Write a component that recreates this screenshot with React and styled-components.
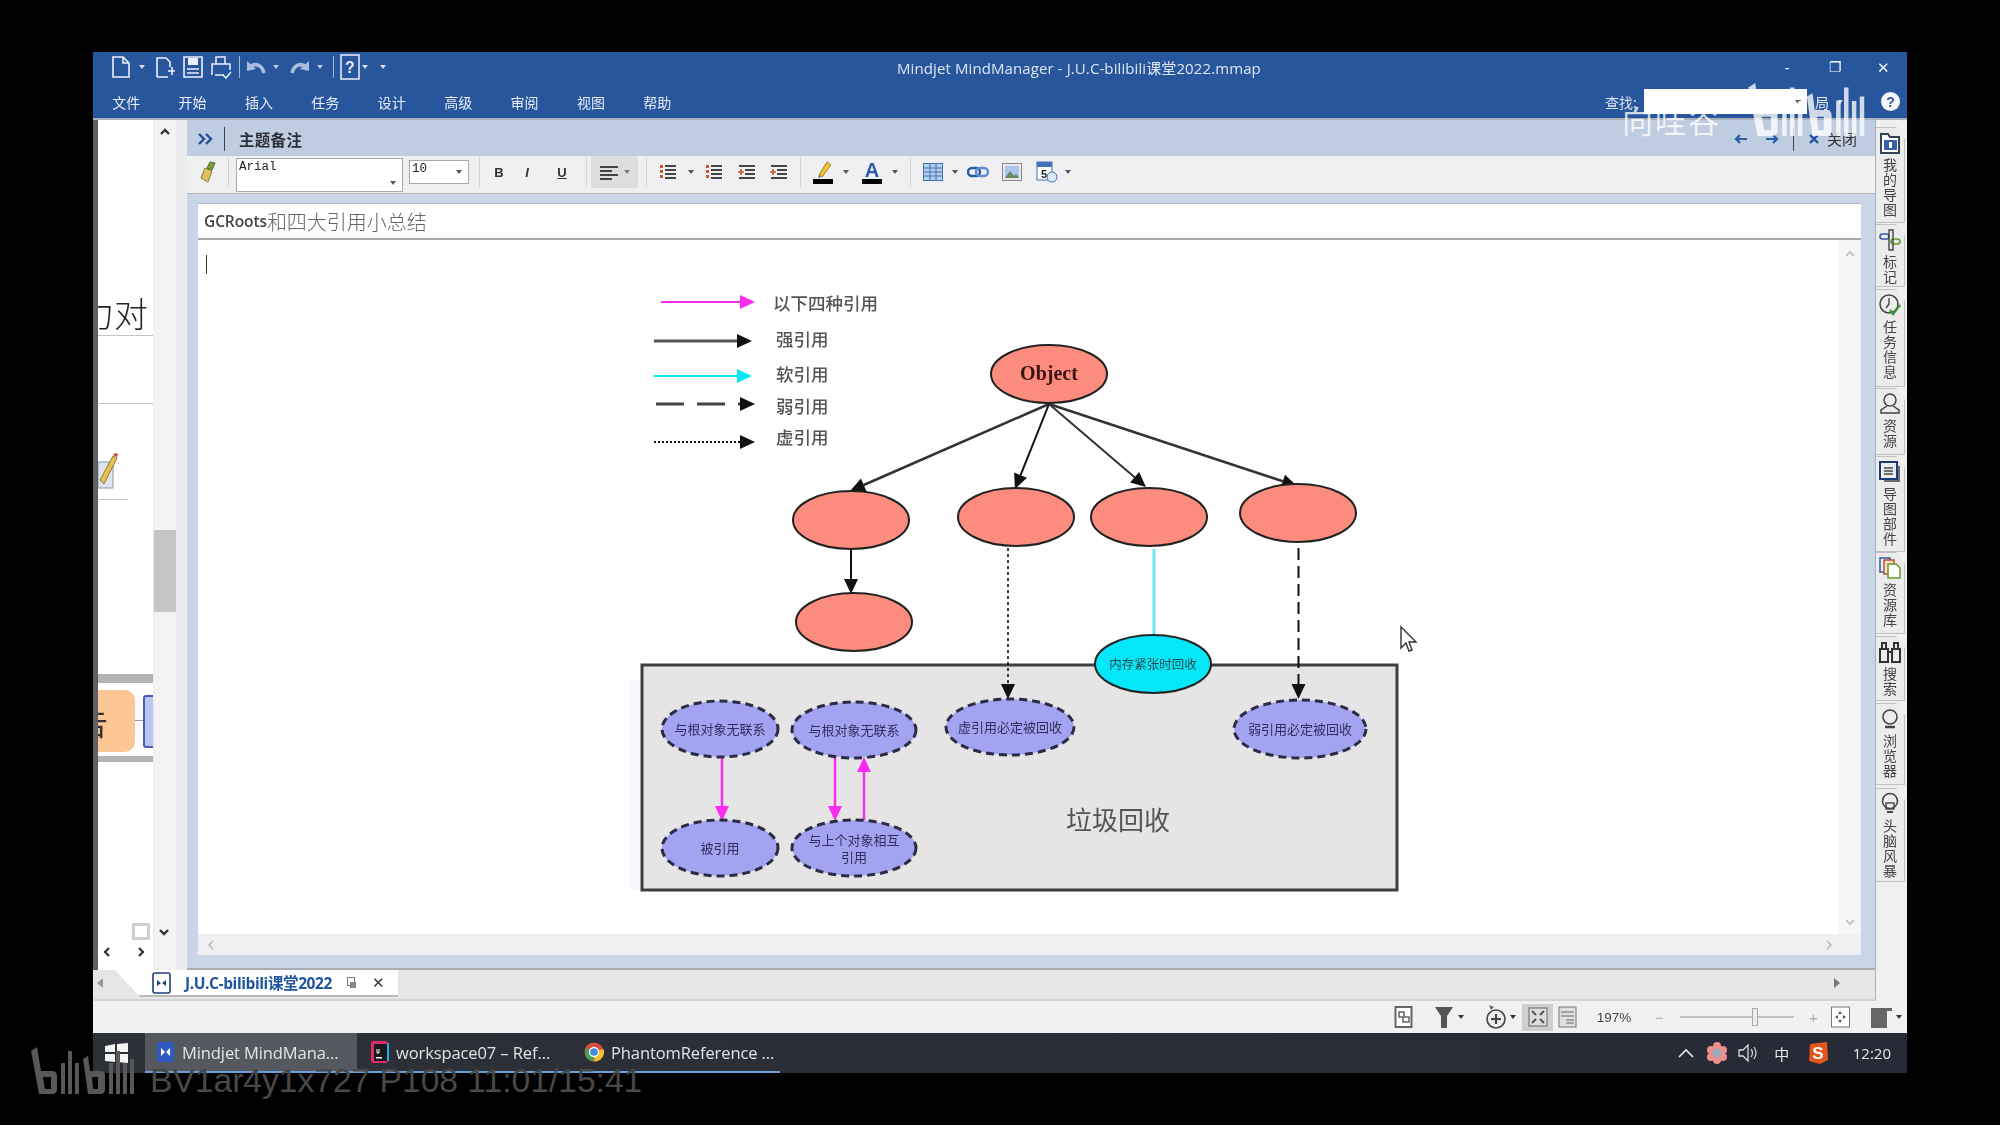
import React from 'react';
import styled, { createGlobalStyle } from 'styled-components';

const Global = createGlobalStyle`
  html, body { margin: 0; padding: 0; background: #000; }
  body { font-family: "Noto Sans CJK SC", "Liberation Sans", sans-serif; }
`;
const Screen = styled.div`
  position: relative; width: 2000px; height: 1125px; background: #000; overflow: hidden;
  padding: 52px 93px 52px 93px; box-sizing: border-box;
`;
const Window = styled.div`
  width: 1814px; height: 1021px; display: flex; flex-direction: column; filter: blur(0.5px); background: #f0f0f0;
`;
const TitleBar = styled.header`
  height: 66px; flex: none; background: #28569d; color: #e6ecf5; display: flex; flex-direction: column;
`;
const TopRow = styled.div`height: 32px; display: flex; align-items: center; padding: 0 0 2px 18px; box-sizing: border-box;`;
const MenuRow = styled.div`height: 34px; display: flex; align-items: center; padding-top: 1px; box-sizing: border-box;`;
const Q = styled.span`
  display: flex; align-items: center; justify-content: center; flex: none;
  width: ${p => p.$w}px; margin-left: ${p => p.$ml || 0}px;
`;
const QSep = styled.span`width: 1px; height: 22px; background: #9db5d8; flex: none; margin-left: ${p => p.$ml}px;`;
const WinTitle = styled.div`
  margin-left: 511px; width: 370px; font-family: "Open Sans", "Noto Sans CJK SC", sans-serif; font-size: 15px; letter-spacing: 0.1px;
  color: #dfe6f2; white-space: nowrap;
`;
const WinControls = styled.div`margin-left: auto; display: flex; align-items: center;`;
const WinBtn = styled.span`
  width: 48px; text-align: center; color: #f4f7fb; font-size: ${p => p.$s || 14}px; font-family: "Liberation Sans", sans-serif; line-height: 1;
`;
const MenuItem = styled.span`width: 66.4px; text-align: center; font-size: 14px; color: #e8edf6; flex: none;`;
const MenuRight = styled.div`margin-left: auto; display: flex; align-items: center;`;
const FindLabel = styled.span`font-size: 14px; color: #d9e2f0; margin-right: 7px;`;
const FindInput = styled.div`
  width: 163px; height: 25px; background: #fff; display: flex; align-items: center; justify-content: flex-end; padding-right: 6px; box-sizing: border-box;
`;
const Caret = styled.span`
  display: inline-block; width: 0; height: 0; flex: none; border-left: 3px solid transparent; border-right: 3px solid transparent;
  border-top: 4px solid ${p => p.$c || '#555'}; margin-left: ${p => p.$ml || 0}px;
`;
const LayoutLabel = styled.span`width: 30px; text-align: center; font-size: 14px; color: #e8edf6; flex: none;`;
const HelpDot = styled.span`
  width: 19px; height: 19px; border-radius: 50%; background: #f6f8fb; color: #28569d; font: bold 14px "Liberation Sans", sans-serif;
  display: flex; align-items: center; justify-content: center; margin: 0 7px 0 ${p => p.$ml}px;
`;
const Main = styled.div`height: 883px; flex: none; display: flex; border-top: 2px solid #aab0b8; box-sizing: border-box;`;
const Center = styled.div`width: 1782px; flex: none; display: flex; flex-direction: column;`;
const DocRow = styled.div`flex: 1; display: flex; min-height: 0;`;
const LeftPanel = styled.aside`
  width: 94px; flex: none; display: flex; background: #ececee; border-left: 5px solid #5e6064; box-sizing: border-box;
`;
const MapCanvas = styled.div`position: relative; width: 55px; flex: none; background: #fff; overflow: hidden;`;
const MapRule = styled.div`position: absolute; left: 0; top: ${p => p.$y - 120}px; height: ${p => p.$h || 1}px; width: ${p => p.$w || 55}px; background: ${p => p.$c || '#c4c4c4'};`;
const MapWord = styled.div`position: absolute; right: 5px; top: ${p => p.$y - 120}px; font-size: ${p => p.$s}px; color: #222; line-height: 1; white-space: nowrap; font-family: "Noto Sans CJK SC", sans-serif; font-weight: 300;`;
const Topic = styled.div`
  position: absolute; left: -20px; top: 570px; width: 57px; height: 62px; border-radius: 10px; background: #fcc794; box-sizing: border-box;
  display: flex; align-items: center; justify-content: flex-end; padding-right: 27px; font-size: 32px; color: #333; line-height: 1;
`;
const SubTopic = styled.div`
  position: absolute; left: 45px; top: 575px; width: 20px; height: 53px; background: #bcc4f0; border: 2px solid #4a5bc0; border-radius: 3px; box-sizing: border-box;
`;
const MapLink = styled.div`position: absolute; left: 37px; top: 600px; width: 8px; height: 1px; background: #999;`;
const PencilWrap = styled.div`position: absolute; left: 0; top: 332px;`;
const MapScroll = styled.div`
  width: 22px; flex: none; margin-left: 1px; background: #f3f3f4; display: flex; flex-direction: column; position: relative;
`;
const ScrollThumb = styled.div`position: absolute; left: 0; right: 0; top: 410px; height: 82px; background: #c5c5c7;`;
const Chev = styled.span`
  display: flex; justify-content: center; align-items: center; color: #333; flex: none;
`;
const ChevUpSlot = styled(Chev)`padding-top: 6px;`;
const LeftFoot = styled.div`position: absolute; left: -22px; top: 803px; width: 38px; display: flex; align-items: center; justify-content: space-between;`;
const MiniBox = styled.span`width: 18px; height: 17px; background: #fff; border: 3px solid #cfcfcf; box-sizing: border-box; display: flex;`;
const LeftNav = styled.div`position: absolute; left: -53px; top: 826px; width: 46px; display: flex; justify-content: space-between;`;
const NotePanel = styled.section`flex: 1; min-width: 0; display: flex; flex-direction: column; background: #e9edf3;`;
const NoteHead = styled.div`height: 36px; flex: none; background: #bfcde0; display: flex; align-items: center; color: #222; padding-top: 1px; box-sizing: border-box;`;
const HeadTitle = styled.strong`font-size: 15.5px; color: #2a2f38; margin-left: 14px; letter-spacing: .3px;`;
const HeadSep = styled.span`width: 1px; height: 24px; background: #444; flex: none; margin-left: ${p => p.$ml}px;`;
const HeadRight = styled.div`margin-left: auto; display: flex; align-items: center; padding-right: 18px;`;
const HeadClose = styled.span`font-size: 15px; color: #333; margin-left: 6px;`;
const ToolBar = styled.div`height: 38px; flex: none; background: #f0f0f2; border-bottom: 1px solid #b4b8be; display: flex; align-items: center; padding: 0 0 5px 10px; box-sizing: border-box;`;
const Tool = styled.span`
  display: flex; align-items: center; justify-content: center; flex: none; width: ${p => p.$w}px; margin-left: ${p => p.$ml || 0}px;
`;
const Letter = styled.span`font: ${p => p.$i ? 'italic' : 'normal'} bold 13px "Liberation Sans", sans-serif; color: #333; text-decoration: ${p => p.$u ? 'underline' : 'none'};`;
const TSep = styled.span`width: 1px; height: 30px; background: #d4d4d6; flex: none; margin-left: ${p => p.$ml}px;`;
const Combo = styled.div`
  width: ${p => p.$w}px; height: ${p => p.$h}px; margin-left: ${p => p.$ml}px; margin-top: ${p => p.$mt}px; align-self: flex-start; flex: none; background: #fff; border: 1px solid #a9a9a9; box-sizing: border-box;
  font: 12.5px/17px "Liberation Mono", monospace; color: #222; padding: 0 0 0 2px; position: relative;
`;
const ComboCaret = styled.span`position: absolute; right: 6px; top: ${p => p.$t}px; display: flex;`;
const AlignBox = styled.span`
  width: 47px; height: 32px; margin-left: 4px; background: #dddddf; flex: none; display: flex; align-items: center; padding-left: 9px; box-sizing: border-box;
`;
const NoteBody = styled.div`flex: 1; min-height: 0; padding: 9px 14px 13px 11px; background: #c9d6e8; display: flex; flex-direction: column; border-bottom: 2px solid #a9adb3;`;
const NoteTitle = styled.div`
  height: 37px; flex: none; background: #fff; border-bottom: 2px solid #a8a8a8; border-top: 1px solid #bbb; box-sizing: border-box; display: flex; align-items: center; padding-left: 6px; color: #555;
`;
const TitleLatin = styled.span`font: 600 15.5px "Open Sans", sans-serif; color: #444; letter-spacing: -.1px;`;
const TitleCjk = styled.span`font-size: 20px; color: #666; font-weight: 300;`;
const EditorRow = styled.div`flex: 1; min-height: 0; display: flex; background: #fff;`;
const Editor = styled.div`flex: 1; min-width: 0; padding: 15px 0 0 8px; box-sizing: border-box; position: relative;`;
const TextCaret = styled.div`width: 1px; height: 19px; background: #333;`;
const Diagram = styled.svg`position: absolute; left: 427px; top: 40px;`;
const VScroll = styled.div`width: 22px; flex: none; background: #f6f6f7; display: flex; flex-direction: column; justify-content: space-between; padding: 8px 0 6px; box-sizing: border-box;`;
const HScroll = styled.div`height: 21px; flex: none; background: #f0f0f2; display: flex; justify-content: space-between; align-items: center; padding: 0 26px 0 7px;`;
const TabRow = styled.div`height: 31px; flex: none; background: #e6e6e6; border-bottom: 2px solid #d4d4d4; box-sizing: border-box; display: flex; align-items: flex-start; position: relative; padding-right: 35px;`;
const DocTab = styled.div`
  width: 283px; height: 27px; margin-left: 12px; padding-left: 36px; background: #fff; box-sizing: border-box; display: flex; align-items: center; border-bottom: 2px solid #bbb; flex: none;
  clip-path: polygon(0 0, 100% 0, 100% 100%, 25px 100%);
`;
const TabName = styled.span`font: bold 15.5px "Open Sans", "Noto Sans CJK SC", sans-serif; letter-spacing: -.4px; color: #1f55a0; margin-left: 13px; white-space: nowrap;`;
const TabPop = styled.span`display: flex; flex: none; margin-left: 15px;`;
const TabX = styled.span`font: 15px "Liberation Sans", sans-serif; color: #333; margin-left: 15px; flex: none;`;
const TabPrev = styled.span`margin: 8px 0 0 4px; flex: none; width: 0; height: 0; border: 5px solid transparent; border-right: 6px solid #999; border-left: 0;`;
const TabNext = styled.span`margin: 8px 0 0 auto; flex: none; width: 0; height: 0; border: 5px solid transparent; border-left: 6px solid #777; border-right: 0;`;
const RightStrip = styled.nav`width: 32px; flex: none; background: #f0f0f0; border-left: 1px solid #aab0b8; box-sizing: border-box; padding: 7px 0 0 0; display: flex; flex-direction: column;`;
const SideTab = styled.div`
  height: ${p => p.$h}px; margin-top: ${p => p.$mt || 0}px; width: 29px; flex: none; box-sizing: border-box; background: #ececec; border: 1px solid #c0c0c0; border-left: 0;
  display: flex; flex-direction: column; align-items: center; padding-top: 3px; clip-path: polygon(0 0, 70% 0, 100% 12px, 100% 100%, 0 100%);
`;
const SideLabel = styled.span`writing-mode: vertical-rl; text-orientation: upright; font-size: 14px; line-height: 1; color: #444; margin-top: 3px; letter-spacing: 1px;`;
const StatusBar = styled.footer`height: 32px; flex: none; background: #f1f1f1; display: flex; align-items: center; padding-right: 5px;`;
const SI = styled.span`display: flex; align-items: center; justify-content: center; flex: none; width: ${p => p.$w}px; margin-left: ${p => p.$auto ? 'auto' : `${p.$ml}px`};`;
const SIBox = styled.span`width: 31px; height: 27px; margin-left: 6px; background: #cfcfcf; display: flex; align-items: center; justify-content: center; flex: none;`;
const Zoom = styled.span`font: 13.5px "Liberation Sans", sans-serif; color: #444; width: 36px; margin-left: 19px; flex: none; text-align: center;`;
const PM = styled.span`font: 15px "Liberation Sans", sans-serif; color: #aaa; width: 8px; margin-left: ${p => p.$ml}px; flex: none; text-align: center;`;
const Slider = styled.div`width: 114px; height: 2px; margin-left: 17px; background: #c4c4c4; flex: none; position: relative;`;
const Thumb = styled.span`position: absolute; left: 72px; top: -8px; width: 6px; height: 18px; border: 1px solid #aaa; background: #eee; box-sizing: border-box;`;
const TaskBar = styled.div`height: 40px; flex: none; background: linear-gradient(90deg,#2e3037,#2b2e38 60%,#262a36); display: flex; align-items: center; color: #e2e4e8;`;
const StartBtn = styled.span`width: 52px; flex: none; display: flex; justify-content: center; padding-right: 6px; box-sizing: border-box;`;
const TaskBtn = styled.div`
  width: ${p => p.$w}px; height: 40px; flex: none; box-sizing: border-box; background: ${p => p.$active ? '#55585f' : 'transparent'}; border-bottom: 2px solid #6aa0da;
  display: flex; align-items: center; padding-left: ${p => p.$pl}px; gap: 7px; font: 16.5px "Open Sans", sans-serif; white-space: nowrap; letter-spacing: -.1px;
`;
const Tray = styled.div`margin-left: auto; display: flex; align-items: center; height: 100%; padding-right: 16px;`;
const TrayItem = styled.span`display: flex; justify-content: center; flex: none; width: ${p => p.$w}px; margin-left: ${p => p.$ml}px; font-size: 15px; color: #e8e8e8;`;
const Clock = styled.span`font: 15px "Open Sans", sans-serif; color: #e8e8e8; margin-left: 24px; flex: none;`;
const Wm = styled.div`position: absolute; left: ${p => p.$x}px; top: ${p => p.$y}px; display: flex; align-items: center; pointer-events: none;`;
const WmName = styled.span`font-size: 31px; letter-spacing: 2px; color: rgba(255,255,255,.78); line-height: 1;`;
const WmCode = styled.span`font: 33.6px "Liberation Sans", sans-serif; color: #484848; white-space: nowrap; line-height: 1;`;

const S = ({ w = 20, h = 20, vb, children }) => <svg width={w} height={h} viewBox={vb || `0 0 ${w} ${h}`} fill="none" style={{ flex: 'none' }}>{children}</svg>;
const IconNew = () => <S w={20} h={24}><path d="M2 2h10l6 6v14H2z M12 2v6h6" stroke="#eef" strokeWidth="1.6"/></S>;
const IconOpen = () => <S w={22} h={24}><path d="M3 22V3h9l4 4v5 M3 22h11 M14 16h7m-3-4v8" stroke="#eef" strokeWidth="1.6"/></S>;
const IconSave = () => <S w={22} h={24}><path d="M2 2h18v20H2z" stroke="#eef" strokeWidth="1.6"/><path d="M6 3h10v7H6z" fill="#eef"/><path d="M5 14h12M5 18h12" stroke="#eef" strokeWidth="1.6"/></S>;
const IconPrint = () => <S w={22} h={24}><path d="M6 9V2h9v7 M2 20V9h18v6 M5 20h9" stroke="#eef" strokeWidth="1.5"/><path d="M13 20l3 3 5-6" stroke="#dfe" strokeWidth="1.5"/></S>;
const IconUndo = ({ flip }) => <S w={20} h={20}><g transform={flip ? 'translate(20 0) scale(-1 1)' : ''}><path d="M18 16C16 8 10 6 5 9" stroke="#a9bedd" strokeWidth="3.6"/><path d="M1 4v10l9-2z" fill="#a9bedd"/></g></S>;
const IconHelpBox = () => <S w={20} h={26}><rect x="1" y="1" width="18" height="24" stroke="#eef" strokeWidth="1.5"/><text x="10" y="19" textAnchor="middle" fontSize="16" fontWeight="700" fill="#eef" fontFamily="Liberation Sans">?</text></S>;
const Lines = ({ c = '#444', ind, num }) => <S w={18} h={16}>{[1, 5, 9, 13].map((y, i) => <rect key={y} x={ind ? (i % 3 ? 8 : 2) : 6} y={y} width={ind ? (i % 3 ? 10 : 16) : 11} height="2" fill={c} />)}{num && [1, 6, 11].map(y => <rect key={y} x="1" y={y} width="3" height="3" fill="#d0562a" />)}{ind && <path d="M1 8h6M4 5v6" stroke="#c8502a" strokeWidth="1.6"/>}</S>;

const IconBrush = () => <S w={20} h={24}><path d="M8 8l7 3-4 11-7-4z" fill="#e0c064" stroke="#8a7a30"/><path d="M13 2l5 1-3 7-5-2z" fill="#7aa03a" stroke="#50702a"/></S>;
const IconAlign = () => <S w={18} h={15}><path d="M0 2h18M0 6h12M0 10h18M0 14h12" stroke="#444" strokeWidth="2"/></S>;
const IconHigh = () => <S w={22} h={24}><path d="M7 15L15 2l4 3-9 12z" fill="#f3c230" stroke="#a68220"/><path d="M7 15l2 2-3 1z" fill="#3a6fc0"/><rect x="1" y="19" width="20" height="5" fill="#000"/></S>;
const IconFontC = () => <S w={22} h={24}><text x="11" y="17" textAnchor="middle" fontSize="20" fontWeight="700" fill="#2a5ca8" fontFamily="Liberation Sans">A</text><rect x="1" y="19" width="20" height="5" fill="#000"/></S>;
const IconTable = () => <S w={20} h={18}><rect x=".5" y=".5" width="19" height="17" fill="#b8cde8" stroke="#3f72b8"/><path d="M1 5h18M1 9h18M1 13h18M7 1v16M13 1v16" stroke="#3f72b8"/></S>;
const IconLink = () => <S w={22} h={14}><rect x="1" y="3" width="12" height="8" rx="4" stroke="#2a5ca8" strokeWidth="2.4"/><rect x="9" y="3" width="12" height="8" rx="4" stroke="#5d8fd0" strokeWidth="2.4"/></S>;
const IconImage = () => <S w={20} h={18}><rect x=".5" y=".5" width="19" height="17" fill="#e8e8e8" stroke="#888"/><rect x="3" y="3" width="14" height="12" fill="#a9c7ea"/><path d="M3 15l5-7 4 5 2-2 3 4z" fill="#6a8a5a"/></S>;
const IconSched = () => <S w={22} h={22}><rect x="1" y="1" width="15" height="18" fill="#fff" stroke="#3f72b8"/><rect x="1" y="1" width="15" height="5" fill="#3f72b8"/><text x="8" y="17" textAnchor="middle" fontSize="11" fontWeight="700" fill="#222" fontFamily="Liberation Sans">5</text><circle cx="16" cy="16" r="5" fill="#dbe8f6" stroke="#3f72b8"/></S>;

const IconMapDoc = () => <S w={19} h={24}><rect x="1.5" y="2" width="16" height="20" fill="#fff" stroke="#666" strokeWidth="2"/><path d="M5 7h5v5H5zM9 12h6v5H9z" fill="none" stroke="#666" strokeWidth="1.5"/></S>;
const IconFilter = () => <S w={18} h={24}><path d="M0 2h18l-6 9v12H6V11z" fill="#555"/></S>;
const IconFocus = () => <S w={20} h={26}><circle cx="10" cy="15" r="9" stroke="#444" strokeWidth="1.6" fill="#eee"/><path d="M10 10v10M5 15h10" stroke="#444" strokeWidth="2.2"/><path d="M3 1l5 2-3 3z" fill="#666"/></S>;
const IconFit = () => <S w={20} h={20}><rect x="1" y="1" width="18" height="18" fill="#ddd" stroke="#666"/><path d="M4 4l4 4M16 4l-4 4M4 16l4-4M16 16l-4-4" stroke="#555" strokeWidth="2"/></S>;
const IconPage = () => <S w={19} h={24}><rect x="1" y="2" width="17" height="20" fill="#e0e0e0" stroke="#777"/><path d="M3 7h13M3 11h13M8 15h8M8 18h8" stroke="#666"/></S>;
const IconCenter = () => <S w={19} h={22}><rect x=".5" y="1" width="18" height="20" fill="#fff" stroke="#777"/><path d="M9 5l2 3H7zM9 17l2-3H7zM4 11l3-2v4zM15 11l-3-2v4z" fill="#555"/></S>;
const IconPanel = () => <S w={21} h={22}><rect x="0" y="2" width="13" height="20" fill="#666"/><path d="M13 2h8v3h-5v17h-3z" fill="#666"/></S>;

const IconWin = () => <S w={23} h={20}><path d="M0 3l10-2v8H0zM12 1l11-1v9H12zM0 11h10v8L0 18zM12 11h11v9l-11-1z" fill="#f4f4f4"/></S>;
const IconMind = () => <S w={19} h={22}><rect x="1" y="1" width="17" height="20" rx="2" fill="#2f5bc0"/><path d="M5 7l4 4-4 4zM14 7l-4 4 4 4z" fill="#fff"/></S>;
const IconIdea = () => <S w={19} h={24}><rect x="1" y="1" width="17" height="22" rx="3" fill="#e02a6a"/><rect x="4" y="4" width="13" height="17" fill="#1a1a1a"/><path d="M18 3v18" stroke="#27a8e8" strokeWidth="2"/><path d="M7 9v4h2V9" stroke="#fff"/><rect x="6" y="17" width="6" height="1.5" fill="#fff"/></S>;
const IconChrome = () => <S w={20} h={24}><circle cx="10" cy="12" r="9.5" fill="#dd4b3c"/><path d="M10 12L1.5 8v6a9.5 9.5 0 0 0 8 7.5z" fill="#3aa757"/><path d="M10 12l9.5-3a9.5 9.5 0 0 1-9 12.5z" fill="#f6c12c"/><circle cx="10" cy="12" r="4.5" fill="#4a89dc" stroke="#fff" strokeWidth="1.3"/></S>;
const IconChevUp = () => <S w={18} h={12}><path d="M2 10l7-7 7 7" stroke="#e8e8e8" strokeWidth="1.6"/></S>;
const IconFlower = () => <S w={20} h={22}>{[[10, 4], [16, 8], [16, 15], [10, 18], [4, 15], [4, 8]].map(([x, y]) => <circle key={x + '' + y} cx={x} cy={y} r="4" fill="#ef8f8c" />)}<circle cx="10" cy="11" r="4.5" fill="#9aa9bb" /></S>;
const IconSpeaker = () => <S w={22} h={20}><path d="M1 7h4l5-5v16l-5-5H1z" stroke="#ddd" strokeWidth="1.3"/><path d="M13 6q3 4 0 8M16 4q4 6 0 12" stroke="#ccc" strokeWidth="1.3"/></S>;
const IconSogou = () => <S w={22} h={24}><path d="M3 3l17-2 1 18-8 4-11-3z" fill="#e4571c"/><text x="11" y="18" textAnchor="middle" fontSize="17" fontWeight="700" fill="#fff" fontFamily="Liberation Sans">S</text></S>;
const Nav = ({ d }) => <S w={14} h={14}><path d={d} stroke="#2a5ca8" strokeWidth="2.2"/></S>;
const ChevPath = ({ d, c = '#333', w = 2, s = 12 }) => <S w={s} h={s}><path d={d} stroke={c} strokeWidth={w}/></S>;

const SideIcons = [
  <S w={22} h={24}><path d="M2 22V3h7l2 3h9v16z" fill="#fff" stroke="#345"  strokeWidth="2"/><rect x="5" y="9" width="13" height="10" fill="#3b5fb0"/><rect x="10" y="11" width="3" height="6" fill="#fff"/></S>,
  <S w={22} h={24}><rect x="1" y="6" width="9" height="5" rx="2.5" stroke="#2a5ca8" strokeWidth="1.6"/><rect x="12" y="11" width="9" height="5" rx="2.5" stroke="#6a9a2a" strokeWidth="1.6"/><path d="M10 2h4v20h-4z" stroke="#444" strokeWidth="1.4"/></S>,
  <S w={22} h={24}><circle cx="10" cy="11" r="9" stroke="#444" strokeWidth="1.5"/><path d="M10 5v6l-3 4" stroke="#444" strokeWidth="1.4"/><path d="M11 17l3 4 7-9" stroke="#3a9a3a" strokeWidth="2.4"/></S>,
  <S w={22} h={24}><circle cx="11" cy="8" r="6" stroke="#444" strokeWidth="1.5"/><path d="M8 14l-6 4v3h18v-3l-6-4" stroke="#444" strokeWidth="1.5"/></S>,
  <S w={22} h={24}><rect x="1" y="2" width="17" height="17" stroke="#1a3a7a" strokeWidth="2"/><path d="M20 6v15H5" stroke="#444" strokeWidth="1.5"/><path d="M5 8h9M5 11h9M5 14h9" stroke="#444" strokeWidth="1.4"/></S>,
  <S w={22} h={24}><rect x="1" y="2" width="10" height="14" fill="#eee" stroke="#2a5ca8" strokeWidth="1.5"/><rect x="5" y="4" width="10" height="14" fill="#f5e0d0" stroke="#c0502a" strokeWidth="1.5"/><path d="M9 8h8l4 4v10H9z" fill="#fff" stroke="#6a9a2a" strokeWidth="1.5"/></S>,
  <S w={22} h={24}><rect x="1" y="9" width="8" height="13" stroke="#333" strokeWidth="2"/><rect x="13" y="9" width="8" height="13" stroke="#333" strokeWidth="2"/><path d="M9 12h4M3 3h4v6H3zM15 3h4v6h-4z" stroke="#333" strokeWidth="2"/></S>,
  <S w={22} h={24}><circle cx="11" cy="10" r="7" stroke="#444" strokeWidth="1.6"/><path d="M6 20h10" stroke="#444" strokeWidth="2.4"/></S>,
  <S w={22} h={24}><circle cx="11" cy="9" r="7.5" stroke="#444" strokeWidth="1.6"/><rect x="7" y="11" width="8" height="6" stroke="#444" strokeWidth="1.4"/><path d="M8 20h6" stroke="#444" strokeWidth="2"/></S>,
];
const SideTabs = [
  ['我的导图', 96, 0], ['标记', 63, 1], ['任务信息', 98, 2], ['资源', 67, 1], ['导图部件', 96, 1], ['资源库', 82, 0], ['搜索', 65, 2], ['浏览器', 82, 2], ['头脑风暴', 94, 3],
];
const Logo = ({ w, h, c }) => (
  <svg width={w} height={h} viewBox="0 0 108 48" fill={c}>
    <path fillRule="evenodd" d="M1 4l6-4 4 24h11q5 0 5 5v13q0 5-5 5H9zM13 30l2 12h6V30z"/>
    <path d="M31 16h4v31h-4zM38 4h4v43h-4zM45 16h4v31h-4z"/>
    <path fillRule="evenodd" d="M53 12l5-3 2 15h11q4 0 4 5v13q0 5-4 5H58zM62 30l1 12h5V30z"/>
    <path d="M79 16h4v31h-4zM86 4h4v43h-4zM93 16h4v31h-4zM100 12h4v35h-4z"/>
  </svg>
);
const Arrow = ({ x1, y1, x2, y2, c = '#111', sw = 2, dash, head = 15, hw = 7, lc }) => {
  const a = Math.atan2(y2 - y1, x2 - x1), ux = Math.cos(a), uy = Math.sin(a);
  const bx = x2 - ux * head, by = y2 - uy * head;
  return (<g>
    <line x1={x1} y1={y1} x2={bx} y2={by} stroke={lc || c} strokeWidth={sw} strokeDasharray={dash} />
    <polygon points={`${x2},${y2} ${bx - uy * hw},${by + ux * hw} ${bx + uy * hw},${by - ux * hw}`} fill={c} />
  </g>);
};
const Oval = ({ cx, cy, rx = 58, ry = 29 }) => <ellipse cx={cx} cy={cy} rx={rx} ry={ry} fill="#fc8d7e" stroke="#222" strokeWidth="2" />;
const Dash = ({ cx, cy, rx, ry = 28, label, lines }) => (<g>
  <ellipse cx={cx} cy={cy} rx={rx} ry={ry} fill="#a3a4f1" stroke="#2c2c44" strokeWidth="3" strokeDasharray="8 5" />
  {(lines || [label]).map((t, i, all) => <text key={t} x={cx} y={cy + 5 + (i - (all.length - 1) / 2) * 17} textAnchor="middle" fontSize="13" fill="#30305e" fontFamily="Noto Sans CJK SC">{t}</text>)}
</g>);
const LegendText = ({ x, y, t }) => <text x={x} y={y + 6} fontSize="17.5" fill="#555" fontWeight="500" fontFamily="Noto Sans CJK SC">{t}</text>;

const App = () => (
  <Screen>
    <Global />
    <Window>
      <TitleBar>
        <TopRow>
          <Q $w={20}><IconNew /></Q><Q $w={6} $ml={8}><Caret $c="#dde" /></Q>
          <Q $w={22} $ml={9}><IconOpen /></Q><Q $w={22} $ml={6}><IconSave /></Q><Q $w={22} $ml={6}><IconPrint /></Q>
          <QSep $ml={7} />
          <Q $w={20} $ml={6}><IconUndo /></Q><Q $w={6} $ml={7}><Caret $c="#b9c9e2" /></Q>
          <Q $w={20} $ml={11}><IconUndo flip /></Q><Q $w={6} $ml={7}><Caret $c="#b9c9e2" /></Q>
          <QSep $ml={10} />
          <Q $w={20} $ml={6}><IconHelpBox /></Q><Q $w={6} $ml={2}><Caret $c="#dde" /></Q>
          <Q $w={6} $ml={12}><Caret $c="#dde" /></Q>
          <WinTitle>Mindjet MindManager - J.U.C-bilibili课堂2022.mmap</WinTitle>
          <WinControls>
            <WinBtn $s={15}>-</WinBtn><WinBtn>❐</WinBtn><WinBtn $s={15}>✕</WinBtn>
          </WinControls>
        </TopRow>
        <MenuRow>
          {['文件', '开始', '插入', '任务', '设计', '高级', '审阅', '视图', '帮助'].map(m => <MenuItem key={m}>{m}</MenuItem>)}
          <MenuRight>
            <FindLabel>查找:</FindLabel>
            <FindInput><Caret /></FindInput>
            <LayoutLabel>局</LayoutLabel>
            <Caret $c="#dde" />
            <HelpDot $ml={38}>?</HelpDot>
          </MenuRight>
        </MenuRow>
      </TitleBar>
      <Main>
        <Center>
          <DocRow>
            <LeftPanel>
              <MapCanvas>
                <MapWord $y={296} $s={34}>力对</MapWord>
                <MapRule $y={335} />
                <MapRule $y={403} />
                <PencilWrap>
                  <svg width="20" height="40" viewBox="0 0 20 40" fill="none"><rect x="0" y="10" width="15" height="26" fill="#dfe5ef" stroke="#8a95a8"/><path d="M2 28L15 4l4 2L6 32z" fill="#ecc050" stroke="#8a7a30"/><path d="M15 3l4 2 1-3-3-1z" fill="#d04040"/></svg>
                </PencilWrap>
                <MapRule $y={499} $w={30} />
                <MapRule $y={674} $h={9} $c="#b4b4b4" />
                <Topic>告</Topic><MapLink /><SubTopic />
                <MapRule $y={756} $h={6} $c="#b4b4b4" />
              </MapCanvas>
              <MapScroll>
                <ChevUpSlot><ChevPath d="M2 8l4-4 4 4" w={2.4} /></ChevUpSlot>
                <ScrollThumb />
                <LeftFoot>
                  <MiniBox />
                  <Chev><ChevPath d="M2 4l4 4 4-4" w={2.4} /></Chev>
                </LeftFoot>
                <LeftNav>
                  <Chev><ChevPath d="M8 2L4 6l4 4" w={2.2} /></Chev>
                  <Chev><ChevPath d="M4 2l4 4-4 4" w={2.2} /></Chev>
                </LeftNav>
              </MapScroll>
            </LeftPanel>
            <NotePanel>
              <NoteHead>
                <Tool $w={16} $ml={10}><S w={16} h={14}><path d="M2 2l5 5-5 5M9 2l5 5-5 5" stroke="#1e4fa0" strokeWidth="2.4"/></S></Tool>
                <HeadSep $ml={11} />
                <HeadTitle>主题备注</HeadTitle>
                <HeadRight>
                  <Nav d="M13 7H2M6 3L2 7l4 4" />
                  <Tool $w={14} $ml={17}><Nav d="M1 7h11M8 3l4 4-4 4" /></Tool>
                  <HeadSep $ml={14} />
                  <Tool $w={14} $ml={13}><S w={12} h={12}><path d="M2 2l8 8M10 2l-8 8" stroke="#1e4fa0" strokeWidth="2.4"/></S></Tool>
                  <HeadClose>关闭</HeadClose>
                </HeadRight>
              </NoteHead>
              <ToolBar>
                <Tool $w={20}><IconBrush /></Tool>
                <TSep $ml={11} />
                <Combo $w={167} $h={34} $ml={7} $mt={2}>Arial<ComboCaret $t={22}><Caret $ml={0} /></ComboCaret></Combo>
                <Combo $w={60} $h={24} $ml={6} $mt={4}>10<ComboCaret $t={9}><Caret /></ComboCaret></Combo>
                <TSep $ml={10} />
                <Tool $w={20} $ml={9}><Letter>B</Letter></Tool>
                <Tool $w={20} $ml={8}><Letter $i>I</Letter></Tool>
                <Tool $w={20} $ml={15}><Letter $u>U</Letter></Tool>
                <TSep $ml={14} />
                <AlignBox><IconAlign /><Caret $ml={6} $c="#777" /></AlignBox>
                <TSep $ml={8} />
                <Tool $w={16} $ml={13}><Lines num /></Tool>
                <Tool $w={6} $ml={12}><Caret /></Tool>
                <Tool $w={16} $ml={12}><Lines num /></Tool>
                <Tool $w={18} $ml={15}><Lines ind /></Tool>
                <Tool $w={18} $ml={14}><Lines ind /></Tool>
                <TSep $ml={13} />
                <Tool $w={22} $ml={11}><IconHigh /></Tool>
                <Tool $w={6} $ml={9}><Caret /></Tool>
                <Tool $w={22} $ml={12}><IconFontC /></Tool>
                <Tool $w={6} $ml={9}><Caret /></Tool>
                <TSep $ml={12} />
                <Tool $w={20} $ml={12}><IconTable /></Tool>
                <Tool $w={6} $ml={9}><Caret /></Tool>
                <Tool $w={22} $ml={9}><IconLink /></Tool>
                <Tool $w={20} $ml={13}><IconImage /></Tool>
                <Tool $w={22} $ml={14}><IconSched /></Tool>
                <Tool $w={6} $ml={7}><Caret /></Tool>
              </ToolBar>
              <NoteBody>
                <NoteTitle><TitleLatin>GCRoots</TitleLatin><TitleCjk>和四大引用小总结</TitleCjk></NoteTitle>
                <EditorRow>
                  <Editor>
                    <TextCaret />
                    <Diagram width="800" height="640" viewBox="625 280 800 640">
                      <rect x="631" y="680" width="11" height="210" fill="#f8f7fd" />
                      <rect x="642" y="665" width="755" height="225" fill="#e5e5e5" stroke="#3f3f3f" strokeWidth="3" />
                      <Arrow x1={661} y1={302} x2={755} y2={302} c="#fb2bf0" />
                      <LegendText x={773} y={304} t="以下四种引用" />
                      <Arrow x1={654} y1={341} x2={752} y2={341} lc="#555" sw={3} />
                      <LegendText x={776} y={340} t="强引用" />
                      <Arrow x1={654} y1={376} x2={752} y2={376} c="#0de6f8" />
                      <LegendText x={776} y={375} t="软引用" />
                      <Arrow x1={656} y1={404} x2={755} y2={404} lc="#444" sw={3} dash="28 13" />
                      <LegendText x={776} y={407} t="弱引用" />
                      <Arrow x1={654} y1={442} x2={755} y2={442} sw={2} dash="2 2" />
                      <LegendText x={776} y={438} t="虚引用" />

                      <Arrow x1={1049} y1={404} x2={850} y2={491} lc="#333" sw={2.5} />
                      <Arrow x1={1049} y1={404} x2={1015} y2={489} sw={2} />
                      <Arrow x1={1049} y1={404} x2={1146} y2={487} sw={2} lc="#333" />
                      <Arrow x1={1049} y1={404} x2={1297} y2={486} sw={2.5} lc="#333" />
                      <Oval cx={1049} cy={374} />
                      <text x={1049} y={380} textAnchor="middle" fontSize="20" fontWeight="700" fill="#3a1010" fontFamily="Liberation Serif">Object</text>
                      <Oval cx={851} cy={520} /><Oval cx={1016} cy={517} /><Oval cx={1149} cy={517} /><Oval cx={1298} cy={513} />
                      <Arrow x1={851} y1={549} x2={851} y2={594} sw={2} />
                      <Oval cx={854} cy={622} />
                      <Arrow x1={1008} y1={548} x2={1008} y2={699} sw={1.6} dash="3 3" />
                      <line x1={1154} y1={549} x2={1154} y2={640} stroke="#6fe6f5" strokeWidth="3" />
                      <Arrow x1={1298.5} y1={548} x2={1298.5} y2={699} sw={2} dash="12 6" />
                      <ellipse cx={1153} cy={664} rx={58} ry={29} fill="#04e7f9" stroke="#222" strokeWidth="2" />
                      <text x={1153} y={669} textAnchor="middle" fontSize="12.5" fill="#2a4a50" fontFamily="Noto Sans CJK SC">内存紧张时回收</text>
                      <Arrow x1={722} y1={757} x2={722} y2={821} c="#fb2bf0" sw={2.5} />
                      <Arrow x1={835} y1={757} x2={835} y2={821} c="#fb2bf0" sw={2.5} />
                      <Arrow x1={864} y1={820} x2={864} y2={757} c="#fb2bf0" sw={2.5} />
                      <Dash cx={720} cy={729} rx={58} label="与根对象无联系" />
                      <Dash cx={854} cy={730} rx={62} label="与根对象无联系" />
                      <Dash cx={1010} cy={727} rx={64} label="虚引用必定被回收" />
                      <Dash cx={1300} cy={729} rx={66} ry={29} label="弱引用必定被回收" />
                      <Dash cx={720} cy={848} rx={58} label="被引用" />
                      <Dash cx={854} cy={848} rx={62} lines={['与上个对象相互', '引用']} />
                      <text x={1118} y={830} textAnchor="middle" fontSize="26" fill="#555" fontFamily="Noto Sans CJK SC">垃圾回收</text>
                      <path d="M1401 627v21l5-5 3 8 3-1-3-8h7z" fill="#fff" stroke="#333" strokeWidth="1.4" />
                    </Diagram>
                  </Editor>
                  <VScroll>
                    <Chev><ChevPath d="M2 8l4-4 4 4" c="#bbb" w={1.6} /></Chev>
                    <Chev><ChevPath d="M2 4l4 4 4-4" c="#bbb" w={1.6} /></Chev>
                  </VScroll>
                </EditorRow>
                <HScroll>
                  <Chev><ChevPath d="M8 2L4 6l4 4" c="#bbb" w={1.6} /></Chev>
                  <Chev><ChevPath d="M4 2l4 4-4 4" c="#bbb" w={1.6} /></Chev>
                </HScroll>
              </NoteBody>
            </NotePanel>
          </DocRow>
          <TabRow>
            <TabPrev />
            <DocTab>
              <S w={21} h={22}><rect x="2" y="1" width="17" height="20" rx="2" stroke="#1f3f7a" strokeWidth="1.6"/><path d="M6 8l4 3-4 3zM15 8l-4 3 4 3z" fill="#1f3f7a"/></S>
              <TabName>J.U.C-bilibili课堂2022</TabName>
              <TabPop><S w={10} h={12}><rect x=".5" y=".5" width="7" height="8" stroke="#777"/><path d="M3 5h6v6H3z" fill="#888"/></S></TabPop>
              <TabX>✕</TabX>
            </DocTab>
            <TabNext />
          </TabRow>
        </Center>
        <RightStrip>
          {SideTabs.map(([t, h, mt], i) => (
            <SideTab key={t} $h={h} $mt={mt}>{SideIcons[i]}<SideLabel>{t}</SideLabel></SideTab>
          ))}
        </RightStrip>
      </Main>
      <StatusBar>
        <SI $w={19} $auto><IconMapDoc /></SI>
        <SI $w={18} $ml={22}><IconFilter /></SI>
        <SI $w={6} $ml={5}><Caret $c="#333" /></SI>
        <SI $w={20} $ml={22}><IconFocus /></SI>
        <SI $w={6} $ml={4}><Caret $c="#333" /></SI>
        <SIBox><IconFit /></SIBox>
        <SI $w={19} $ml={5}><IconPage /></SI>
        <Zoom>197%</Zoom>
        <PM $ml={23}>−</PM>
        <Slider><Thumb /></Slider>
        <PM $ml={15}>+</PM>
        <SI $w={19} $ml={14}><IconCenter /></SI>
        <SI $w={21} $ml={21}><IconPanel /></SI>
        <SI $w={6} $ml={4}><Caret $c="#333" /></SI>
      </StatusBar>
      <TaskBar>
        <StartBtn><IconWin /></StartBtn>
        <TaskBtn $w={212} $active $pl={11}><IconMind />Mindjet MindMana...</TaskBtn>
        <TaskBtn $w={214} $pl={13}><IconIdea />workspace07 – Ref...</TaskBtn>
        <TaskBtn $w={209} $pl={13}><IconChrome />PhantomReference ...</TaskBtn>
        <Tray>
          <TrayItem $w={18} $ml={0}><IconChevUp /></TrayItem>
          <TrayItem $w={20} $ml={12}><IconFlower /></TrayItem>
          <TrayItem $w={22} $ml={11}><IconSpeaker /></TrayItem>
          <TrayItem $w={20} $ml={12}>中</TrayItem>
          <TrayItem $w={22} $ml={15}><IconSogou /></TrayItem>
          <Clock>12:20</Clock>
        </Tray>
      </TaskBar>
    </Window>
    <Wm $x={1622} $y={104}><WmName>向哇谷</WmName></Wm>
    <Wm $x={1742} $y={83}><Logo w={132} h={54} c="rgba(255,255,255,.78)" /></Wm>
    <Wm $x={30} $y={1047}><Logo w={108} h={48} c="#585858" /></Wm>
    <Wm $x={150} $y={1064}><WmCode>BV1ar4y1x727 P108 11:01/15:41</WmCode></Wm>
  </Screen>
);
export default App;
